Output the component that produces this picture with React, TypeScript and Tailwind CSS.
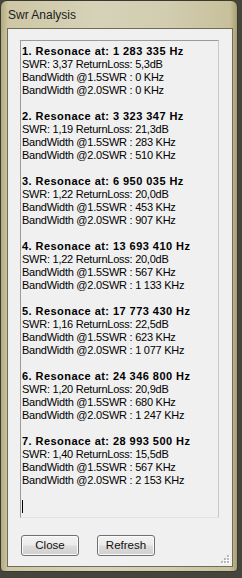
import React from 'react';

const RESULTS = [
  { freq: '1 283 335', swr: '3,37', rl: '5,3', bw15: '0', bw20: '0' },
  { freq: '3 323 347', swr: '1,19', rl: '21,3', bw15: '283', bw20: '510' },
  { freq: '6 950 035', swr: '1,22', rl: '20,0', bw15: '453', bw20: '907' },
  { freq: '13 693 410', swr: '1,22', rl: '20,0', bw15: '567', bw20: '1 133' },
  { freq: '17 773 430', swr: '1,16', rl: '22,5', bw15: '623', bw20: '1 077' },
  { freq: '24 346 800', swr: '1,20', rl: '20,9', bw15: '680', bw20: '1 247' },
  { freq: '28 993 500', swr: '1,40', rl: '15,5', bw15: '567', bw20: '2 153' },
];

const SizeGrip: React.FC = () => (
  <svg className="absolute right-[2px] bottom-[2px]" width="10" height="10" viewBox="0 0 10 10">
    {[
      [7, 1], [4, 4], [7, 4], [1, 7], [4, 7], [7, 7],
    ].map(([x, y], i) => (
      <g key={i}>
        <rect x={x + 1} y={y + 1} width="2" height="2" fill="#ffffff" />
        <rect x={x} y={y} width="2" height="2" fill="#b8b8b8" />
      </g>
    ))}
  </svg>
);

const WinButton: React.FC<{ label: string }> = ({ label }) => (
  <button className="w-[58px] h-[21px] rounded-[3px] border border-[#707070] bg-[linear-gradient(#f2f2f2_0%,#ebebeb_48%,#dddddd_52%,#cfcfcf_100%)] text-[11.5px] text-[#111] leading-none shadow-[inset_0_0_0_1px_#fbfbfb]">
    {label}
  </button>
);

export default function App() {
  return (
    <div className="w-[242px] h-[578px] bg-[#45443d] overflow-hidden" style={{ fontFamily: '"Liberation Sans", Arial, sans-serif' }}>
      <div className="w-[238px] h-[572px] flex flex-col rounded-t-[7px] rounded-b-[4px] border border-[#3a392f] pl-[6px] pr-[4px] pb-[4px] bg-[linear-gradient(90deg,#b3aa7f_0%,#cdc7a5_3%,#d6d2b8_40%,#d2cdb0_70%,#c7c09b_97%,#a99f73_100%)]">
        {/* title bar */}
        <div className="h-[27px] flex items-center pl-[1px] pt-[1px]">
          <span className="text-[12px] text-[#1b1b1b]">Swr Analysis</span>
        </div>

        {/* client area */}
        <div className="relative flex-1 flex flex-col border border-[#6f6c58] bg-[#f0f0f0]">
          <div className="ml-[12px] mt-[11px] w-[199px] h-[478px] border border-[#9b9b9b] border-b-[#e2e2e2] border-r-[#c8c8c8] pl-[1px] pt-[4px] text-[11px] leading-[13px] text-black tracking-[-0.25px]">
            {RESULTS.map((r, i) => (
              <div key={i} className="mb-[13px]">
                <div className="font-bold tracking-[0.45px]">{i + 1}. Resonace at: {r.freq} Hz</div>
                <div>SWR: {r.swr} ReturnLoss: {r.rl}dB</div>
                <div>BandWidth @1.5SWR : {r.bw15} KHz</div>
                <div>BandWidth @2.0SWR : {r.bw20} KHz</div>
              </div>
            ))}
            <div className="h-[13px] flex items-center">
              <div className="w-[1px] h-[13px] bg-black" />
            </div>
          </div>

          <div className="flex gap-[18px] ml-[13px] mt-[17px]">
            <WinButton label="Close" />
            <WinButton label="Refresh" />
          </div>

          <SizeGrip />
        </div>
      </div>
    </div>
  );
}
